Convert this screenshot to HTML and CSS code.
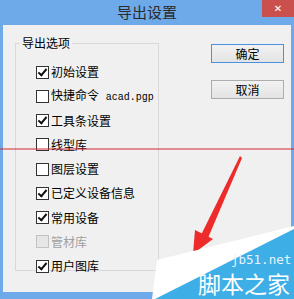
FILE: index.html
```html
<!DOCTYPE html>
<html lang="zh">
<head>
<meta charset="utf-8">
<title>导出设置</title>
<link rel="stylesheet" href="styles.css">
</head>
<body>
<div class="window">
  <div class="titlebar">
    <span class="title">导出设置</span>
    <span class="close">✕</span>
  </div>
  <div class="client">
    <fieldset class="group">
      <legend>导出选项</legend>
      <div class="list">
        <div class="row"><span class="cb on"></span><span class="lbl">初始设置</span></div>
        <div class="row"><span class="cb"></span><span class="lbl">快捷命令 <span class="mono">acad.pgp</span></span></div>
        <div class="row"><span class="cb on"></span><span class="lbl">工具条设置</span></div>
        <div class="row"><span class="cb"></span><span class="lbl">线型库</span></div>
        <div class="row"><span class="cb"></span><span class="lbl">图层设置</span></div>
        <div class="row"><span class="cb on"></span><span class="lbl">已定义设备信息</span></div>
        <div class="row"><span class="cb on"></span><span class="lbl">常用设备</span></div>
        <div class="row disabled"><span class="cb"></span><span class="lbl">管材库</span></div>
        <div class="row"><span class="cb on"></span><span class="lbl">用户图库</span></div>
      </div>
    </fieldset>
    <div class="buttons">
      <button class="btn default">确定</button>
      <button class="btn">取消</button>
    </div>
  </div>
  <div class="redline"></div>
  <svg class="overlay" width="294" height="299" viewBox="0 0 294 299">
    <polygon points="240,156 242,158 208,238 201,235" fill="#ee2b2b"/>
    <polygon points="195,230 213,239 193,254" fill="#ee2b2b"/>
    <polygon points="294,226 157,260 152,299 294,299" fill="#ffffff"/>
    <polygon points="294,229 294,299 155,299" fill="#3eaee6"/>
  </svg>
  <div class="wm-url">jb51.net</div>
  <div class="wm-name">脚本之家</div>
</div>
</body>
</html>
```
FILE: styles.css
```css
html, body {
  margin: 0;
  padding: 0;
}
body {
  width: 294px;
  height: 299px;
  overflow: hidden;
  font-family: "Noto Sans CJK SC", "Noto Sans", sans-serif;
  font-size: 12px;
  color: #000;
}
.window {
  position: relative;
  width: 294px;
  height: 299px;
  background: #6ea9e9;
  display: flex;
  flex-direction: column;
}
.titlebar {
  position: relative;
  height: 25px;
  display: flex;
  justify-content: center;
  align-items: center;
}
.title {
  font-size: 15px;
  line-height: 18px;
  color: #2b2b2b;
  margin-top: -2px;
}
.close {
  position: absolute;
  right: 0;
  top: 0;
  width: 32px;
  height: 17px;
  background: #c9504c;
  color: #fff;
  font-family: "DejaVu Sans", sans-serif;
  font-size: 10px;
  font-weight: bold;
  line-height: 17px;
  text-align: center;
}
.client {
  flex: 1;
  margin: 0 3px 7px 3px;
  background: #f0f0f0;
  display: flex;
  align-items: flex-start;
  padding: 0 7px 7px 12px;
}
.group {
  margin: 11px 0 0 0;
  border: 1px solid #d9d9d9;
  padding: 0 4px 0 4px;
  width: 144px;
  height: 235px;
  box-sizing: border-box;
  min-width: 0;
}
.group legend {
  padding: 0 2px;
  margin-left: 0;
  font-size: 12px;
  line-height: 14px;
}
.list {
  padding: 10px 0 0 16px;
  display: flex;
  flex-direction: column;
}
.row {
  height: 24.25px;
  display: flex;
  align-items: center;
  white-space: nowrap;
}
.cb {
  position: relative;
  width: 11px;
  height: 11px;
  border: 1px solid #333;
  background: #fff;
  flex: none;
}
.cb.on::after {
  content: "";
  position: absolute;
  left: 3px;
  top: 0px;
  width: 3px;
  height: 7px;
  border: solid #111;
  border-width: 0 2px 2px 0;
  transform: rotate(40deg);
}
.lbl {
  margin-left: 2px;
  font-size: 12px;
  line-height: 14px;
}
.mono {
  font-family: "Liberation Mono", monospace;
  font-size: 10px;
  margin-left: 4px;
}
.disabled .cb {
  border-color: #c2c2c2;
  background: #e6e6e6;
}
.disabled .lbl {
  color: #a0a0a0;
}
.buttons {
  margin-left: auto;
  margin-top: 19px;
  display: flex;
  flex-direction: column;
  gap: 17px;
}
.btn {
  width: 73px;
  height: 19px;
  padding: 0;
  border: 1px solid #adadad;
  background: linear-gradient(#f2f2f2, #e3e3e3);
  font-family: "Noto Sans CJK SC", sans-serif;
  font-size: 12px;
  line-height: 15px;
  color: #000;
}
.btn.default {
  border-color: #4a92e0;
}
.redline {
  position: absolute;
  left: 0;
  top: 148px;
  width: 294px;
  height: 2px;
  background: rgba(208, 40, 50, 0.5);
}
.overlay {
  position: absolute;
  left: 0;
  top: 0;
}
.wm-url {
  position: absolute;
  left: 231px;
  top: 252px;
  font-family: "DejaVu Sans Mono", monospace;
  font-size: 12.5px;
  line-height: 16px;
  color: #e6f4ff;
}
.wm-name {
  position: absolute;
  left: 198px;
  top: 268px;
  font-family: "Noto Sans CJK SC", sans-serif;
  font-size: 23px;
  line-height: 30px;
  color: #ffffff;
}
```
